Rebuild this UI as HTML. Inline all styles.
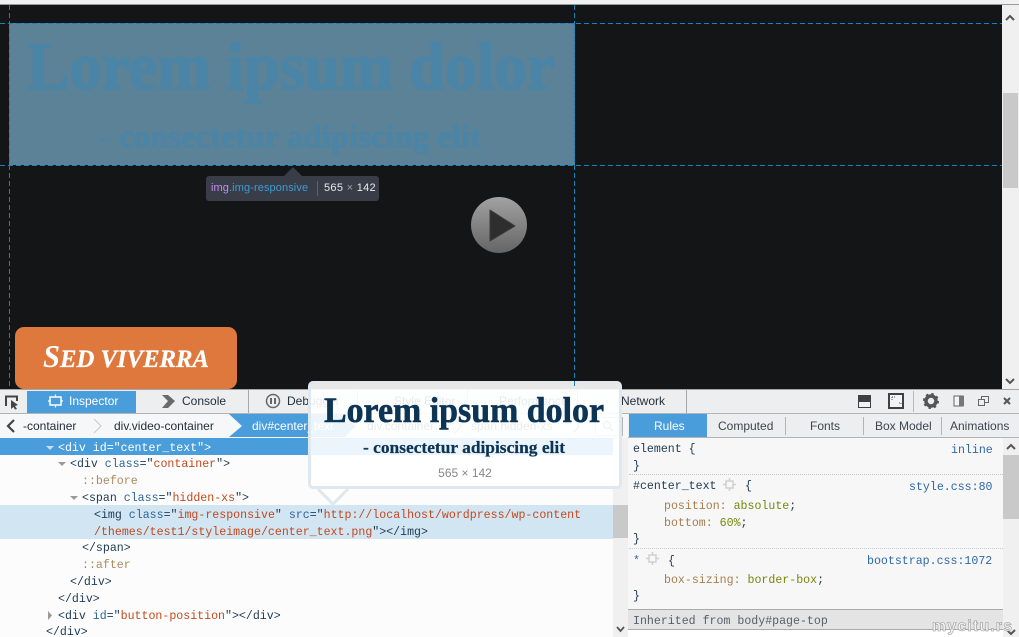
<!DOCTYPE html>
<html><head><meta charset="utf-8">
<style>
html,body{margin:0;padding:0;background:#fff}
#p{position:relative;width:1019px;height:637px;overflow:hidden;background:#fcfcfc;font-family:"Liberation Sans",sans-serif;font-size:12px}
#p div{position:absolute}
.t{white-space:nowrap;line-height:16px;color:#23303c}
.m{font-family:"Liberation Mono",monospace;font-size:11.6px;white-space:pre;line-height:16px;color:#1d3b55;margin-top:2px}
.a{color:#2e6696}.v{color:#c2491d}.p{color:#ad8a5e}.pr{color:#a57f4e}.o{color:#76880a}.l{color:#2f68a6}
</style></head><body>
<div id="p">
<div style="left:0;top:0;width:1019px;height:4px;background:#f1f1f1"></div>
<div style="left:0;top:4px;width:1019px;height:1px;background:#9a9a9a"></div>
<div style="left:0;top:5px;width:1002px;height:384px;background:#141517"></div>
<div style="left:1002px;top:5px;width:17px;height:384px;background:#f0f0f0"></div>
<div style="left:1003px;top:93px;width:15px;height:95px;background:#c9c9c9"></div>
<div style="left:9px;top:23px;width:566px;height:142px;background:#5b8296"></div>

<!-- devtools toolbar -->
<div style="left:0;top:389px;width:1019px;height:24px;background:#eceef0"></div>
<div style="left:0;top:389px;width:1019px;height:1px;background:#a5a5a5"></div>
<div style="left:0;top:413px;width:1019px;height:1px;background:#b4b4b4"></div>
<div style="left:27px;top:391px;width:109px;height:22px;background:#4a9ddb"></div>
<div class="t" style="left:69px;top:393px;color:#fff">Inspector</div>
<div class="t" style="left:182px;top:393px">Console</div>
<div style="left:248px;top:390px;width:1px;height:23px;background:#a8a8a8"></div>
<div class="t" style="left:287px;top:393px">Debugger</div>
<div style="left:357px;top:390px;width:1px;height:23px;background:#a8a8a8"></div>
<div class="t" style="left:394px;top:393px">Style Editor</div>
<div style="left:467px;top:390px;width:1px;height:23px;background:#a8a8a8"></div>
<div class="t" style="left:499px;top:393px">Performance</div>
<div style="left:577px;top:390px;width:1px;height:23px;background:#a8a8a8"></div>
<div class="t" style="left:621px;top:393px">Network</div>
<div style="left:686px;top:390px;width:1px;height:23px;background:#a8a8a8"></div>
<div style="left:913px;top:391px;width:1px;height:21px;background:#bbb"></div>

<!-- breadcrumbs -->
<div style="left:0;top:414px;width:628px;height:24px;background:#f6f7f8"></div>
<svg style="position:absolute;left:0;top:0" width="628" height="440" viewBox="0 0 628 440">
<path d="M229 414L242 426L229 437H345L356 426L345 414Z" fill="#4a9ddb"/>
<path d="M94 419L101 426L94 433" fill="none" stroke="#ccc" stroke-width="1.2"/>
<path d="M455 419L461 426L455 433M574 420L579 426L574 432" fill="none" stroke="#999" stroke-width="1.5"/>
<rect x="595.5" y="417.5" width="27" height="18" fill="#f6f7f8" stroke="#b5b5b5"/>
<circle cx="607" cy="425" r="3.5" fill="none" stroke="#888" stroke-width="1.5"/>
<path d="M610 428L613 431" stroke="#888" stroke-width="1.5"/>
</svg>
<div class="t" style="left:23px;top:418px">-container</div>
<div class="t" style="left:114px;top:418px">div.video-container</div>
<div class="t" style="left:252px;top:418px;color:#fff">div#center_text</div>
<div class="t" style="left:367px;top:418px;color:#333">div.container</div>
<div class="t" style="left:471px;top:418px;color:#333">span.hidden-xs</div>

<!-- right tabs -->
<div style="left:628px;top:414px;width:391px;height:23px;background:#eceef0"></div>
<div style="left:628px;top:437px;width:391px;height:1px;background:#b4b4b4"></div>
<div style="left:629px;top:414px;width:78px;height:23px;background:#4a9ddb"></div>
<div class="t" style="left:654px;top:418px;color:#fff">Rules</div>
<div class="t" style="left:718px;top:418px;color:#3b4650">Computed</div>
<div class="t" style="left:810px;top:418px;color:#3b4650">Fonts</div>
<div class="t" style="left:875px;top:418px;color:#3b4650">Box Model</div>
<div class="t" style="left:950px;top:418px;color:#3b4650">Animations</div>
<div style="left:785px;top:417px;width:1px;height:18px;background:#b4b4b4"></div>
<div style="left:863px;top:417px;width:1px;height:18px;background:#b4b4b4"></div>
<div style="left:941px;top:417px;width:1px;height:18px;background:#b4b4b4"></div>

<!-- markup -->
<div style="left:0;top:438px;width:613px;height:17px;background:#4a9ddb"></div>
<div style="left:0;top:505px;width:613px;height:34px;background:#d2e5f3"></div>
<div style="left:613px;top:438px;width:15px;height:199px;background:#f0f0f0"></div>
<div style="left:613px;top:505px;width:15px;height:33px;background:#c9c9c9"></div>
<div class="m" style="left:58px;top:439px;color:#fff">&lt;div id="center_text"&gt;</div>
<div class="m" style="left:70px;top:455px">&lt;div <span class="a">class</span>="<span class="v">container</span>"&gt;</div>
<div class="m p" style="left:82px;top:472px">::before</div>
<div class="m" style="left:82px;top:489px">&lt;span <span class="a">class</span>="<span class="v">hidden-xs</span>"&gt;</div>
<div class="m" style="left:94px;top:506px">&lt;img <span class="a">class</span>="<span class="v">img-responsive</span>" <span class="a">src</span>="<span class="v">http://localhost/wordpress/wp-content</span></div>
<div class="m" style="left:94px;top:523px"><span class="v">/themes/test1/styleimage/center_text.png</span>"&gt;&lt;/img&gt;</div>
<div class="m" style="left:82px;top:539px">&lt;/span&gt;</div>
<div class="m p" style="left:82px;top:556px">::after</div>
<div class="m" style="left:70px;top:573px">&lt;/div&gt;</div>
<div class="m" style="left:58px;top:590px">&lt;/div&gt;</div>
<div class="m" style="left:58px;top:607px">&lt;div <span class="a">id</span>="<span class="v">button-position</span>"&gt;&lt;/div&gt;</div>
<div class="m" style="left:46px;top:623px">&lt;/div&gt;</div>

<!-- rules -->
<div style="left:628px;top:438px;width:375px;height:199px;background:#f7f7f7"></div>
<div style="left:629px;top:474px;width:374px;border-top:1px dotted #c4c4c4"></div>
<div style="left:629px;top:548px;width:374px;border-top:1px dotted #c4cfd8"></div>
<div class="m" style="left:633px;top:440px">element {</div>
<div class="m l" style="left:951px;top:441px">inline</div>
<div class="m" style="left:633px;top:457px">}</div>
<div class="m" style="left:633px;top:477px">#center_text</div>
<div class="m" style="left:745px;top:477px">{</div>
<div class="m l" style="left:909px;top:478px">style.css:80</div>
<div class="m" style="left:664px;top:497px"><span class="pr">position:</span> <span class="o">absolute</span>;</div>
<div class="m" style="left:664px;top:514px"><span class="pr">bottom:</span> <span class="o">60%</span>;</div>
<div class="m" style="left:633px;top:530px">}</div>
<div class="m l" style="left:633px;top:552px">*</div>
<div class="m" style="left:668px;top:552px">{</div>
<div class="m l" style="left:867px;top:552px">bootstrap.css:1072</div>
<div class="m" style="left:664px;top:571px"><span class="pr">box-sizing:</span> <span class="o">border-box</span>;</div>
<div class="m" style="left:633px;top:587px">}</div>
<div style="left:628px;top:609px;width:375px;height:21px;background:#e4e4e4;border-top:1px solid #aaa;border-bottom:1px solid #aaa;box-sizing:border-box"></div>
<div class="m" style="left:633px;top:612px;color:#55606b">Inherited from body#page-top</div>
<div style="left:628px;top:630px;width:375px;height:7px;background:#fff"></div>
<div style="left:1003px;top:438px;width:16px;height:199px;background:#f0f0f0"></div>
<div style="left:1003px;top:455px;width:16px;height:64px;background:#c9c9c9"></div>

<!-- popup -->
<div style="left:308px;top:381px;width:314px;height:108px;box-sizing:border-box;background:rgba(255,255,255,.9);border:3px solid #dfe7ef;border-top-color:#e4e7ea;border-radius:5px"></div>
<div style="left:308px;top:465px;width:314px;text-align:center;color:#888;line-height:16px">565 × 142</div>

<!-- overlay tooltip -->
<div style="left:206px;top:176px;width:173px;height:25px;background:#383d48;border-radius:3px"></div>
<div style="left:317px;top:181px;width:1px;height:15px;background:#5c616b"></div>
<div class="t" style="left:211px;top:180px;font-size:11px;color:#3d9bd6;letter-spacing:.1px"><span style="color:#c58cf0">img</span>.img-responsive</div>
<div class="t" style="left:324px;top:180px;font-size:11px;color:#e8eaee;letter-spacing:.3px">565 <span style="color:#9aa0aa">×</span> 142</div>

<svg style="position:absolute;left:0;top:0" width="1019" height="637" viewBox="0 0 1019 637">
<defs><linearGradient id="g" x1="0" y1="0" x2="0" y2="1"><stop offset="0" stop-color="#a2a2a2"/><stop offset="1" stop-color="#656565"/></linearGradient></defs>
<g stroke="#1582b8" stroke-width="1" stroke-dasharray="5 3" fill="none">
<path d="M9.5 5V389M574.5 5V389"/>
<path d="M0 23.5H1002M0 165.5H1002" />
</g>
<path d="M284 176L293 167L302 176Z" fill="#383d48"/>
<g font-family="Liberation Serif,serif" font-weight="bold" fill="#4a84a6" stroke="#4a84a6">
<text x="27" y="89" font-size="68" stroke-width="1.2" textLength="528" lengthAdjust="spacingAndGlyphs">Lorem ipsum dolor</text>
<text x="100" y="147" font-size="32" stroke-width=".4" textLength="381" lengthAdjust="spacingAndGlyphs">- consectetur adipiscing elit</text>
</g>
<circle cx="499" cy="225" r="28" fill="url(#g)"/>
<path d="M490 210L515 226L490 241Z" fill="#2e2e2e" stroke="#3a3a3a" stroke-linejoin="round"/>
<rect x="15" y="327" width="222" height="62" rx="9" fill="#df783c"/>
<text x="43" y="367" font-family="Liberation Serif,serif" font-weight="bold" font-style="italic" fill="#fff" font-size="32" textLength="17" lengthAdjust="spacingAndGlyphs">S</text>
<text x="60" y="367" font-family="Liberation Serif,serif" font-weight="bold" font-style="italic" fill="#fff" stroke="#fff" stroke-width=".3" font-size="25" textLength="149" lengthAdjust="spacingAndGlyphs">ED VIVERRA</text>

<!-- toolbar icons -->
<path d="M6 406V396.5H17V401M8 398.5" fill="none" stroke="#444" stroke-width="2"/>
<path d="M11 400L18 405L15 406L17 409L15 409.5L13.5 407L11 409Z" fill="#444"/>
<rect x="50" y="397" width="11" height="8" fill="none" stroke="#fff" stroke-width="1.5"/>
<path d="M48 401H50M61 401H63M55.5 394.5V397M55.5 405V407.5" stroke="#fff" stroke-width="1.2"/>
<path d="M162 395H168L175 401L168 408H162L168 401Z" fill="#6a6a6a"/>
<circle cx="273" cy="401" r="6.5" fill="none" stroke="#666" stroke-width="1.5"/>
<path d="M271 398V404M275 398V404" stroke="#666" stroke-width="2"/>
<rect x="858" y="395" width="13" height="13" fill="#3d4044"/><rect x="859" y="402" width="11" height="5" fill="#f2f2f2"/>
<rect x="889" y="394" width="14" height="14" fill="#f4f4f4" stroke="#3d4044" stroke-width="2"/>
<path d="M892 397h4M892 397v3M899 403h2v2" stroke="#555" fill="none" stroke-dasharray="1 1"/>
<circle cx="931" cy="401" r="5" fill="none" stroke="#555" stroke-width="3.5"/>
<circle cx="931" cy="401" r="7" fill="none" stroke="#555" stroke-width="2" stroke-dasharray="2.5 3"/>
<rect x="954" y="396" width="9" height="10" fill="#f4f4f4" stroke="#666"/><rect x="959" y="396" width="5" height="10" fill="#777"/>
<rect x="981.5" y="396.5" width="7" height="6" fill="none" stroke="#666"/>
<rect x="978.5" y="399.5" width="6" height="6" fill="#eceef0" stroke="#666"/>
<path d="M1004 398L1010 404M1010 398L1004 404" stroke="#555" stroke-width="2"/>

<path d="M14 420L8 426L14 432" fill="none" stroke="#444" stroke-width="2.2"/>

<!-- twisties -->
<path d="M46 446H54L50 450Z" fill="#c8dff2"/>
<path d="M58 462H66L62 466Z" fill="#999"/>
<path d="M70 496H78L74 500Z" fill="#999"/>
<path d="M48 611V620L52 615.5Z" fill="#999"/>

<!-- scroll arrows -->
<path d="M1006 20L1010 16L1014 20" fill="none" stroke="#555" stroke-width="2"/>
<path d="M1006 379L1010 383L1014 379" fill="none" stroke="#555" stroke-width="2"/>
<path d="M617 627L620.5 631L624 627" fill="none" stroke="#555" stroke-width="1.8"/>
<path d="M1007 449L1011 445L1015 449" fill="none" stroke="#555" stroke-width="2"/>
<path d="M1007 630L1011 634L1015 630" fill="none" stroke="#555" stroke-width="2"/>

<!-- filter icons -->
<g fill="none" stroke="#d0d0d0" stroke-width="1.5">
<rect x="726" y="481" width="7" height="7"/><path d="M729.5 478V481M729.5 488V491M723 484.5H726M733 484.5H736"/>
<rect x="649" y="555" width="7" height="7"/><path d="M652.5 552V555M652.5 562V565M646 558.5H649M656 558.5H659"/>
</g>

<!-- popup text -->
<path d="M318 489L333 504L348 489" fill="#fff" stroke="#dfe7ef" stroke-width="3"/>
<g font-family="Liberation Serif,serif" font-weight="bold" fill="#0c3454" stroke="#0c3454">
<text x="324" y="422" font-size="36" stroke-width=".6" textLength="280" lengthAdjust="spacingAndGlyphs">Lorem ipsum dolor</text>
<text x="363" y="453" font-size="17" stroke-width=".25" textLength="202" lengthAdjust="spacingAndGlyphs">- consectetur adipiscing elit</text>
</g>
<text x="932" y="631" font-family="Liberation Sans,sans-serif" font-size="16" font-weight="bold" fill="#f4f4f4" stroke="#999" stroke-width=".6" textLength="80" lengthAdjust="spacing">mycitu.rs</text>
</svg>
</div>
</body></html>
